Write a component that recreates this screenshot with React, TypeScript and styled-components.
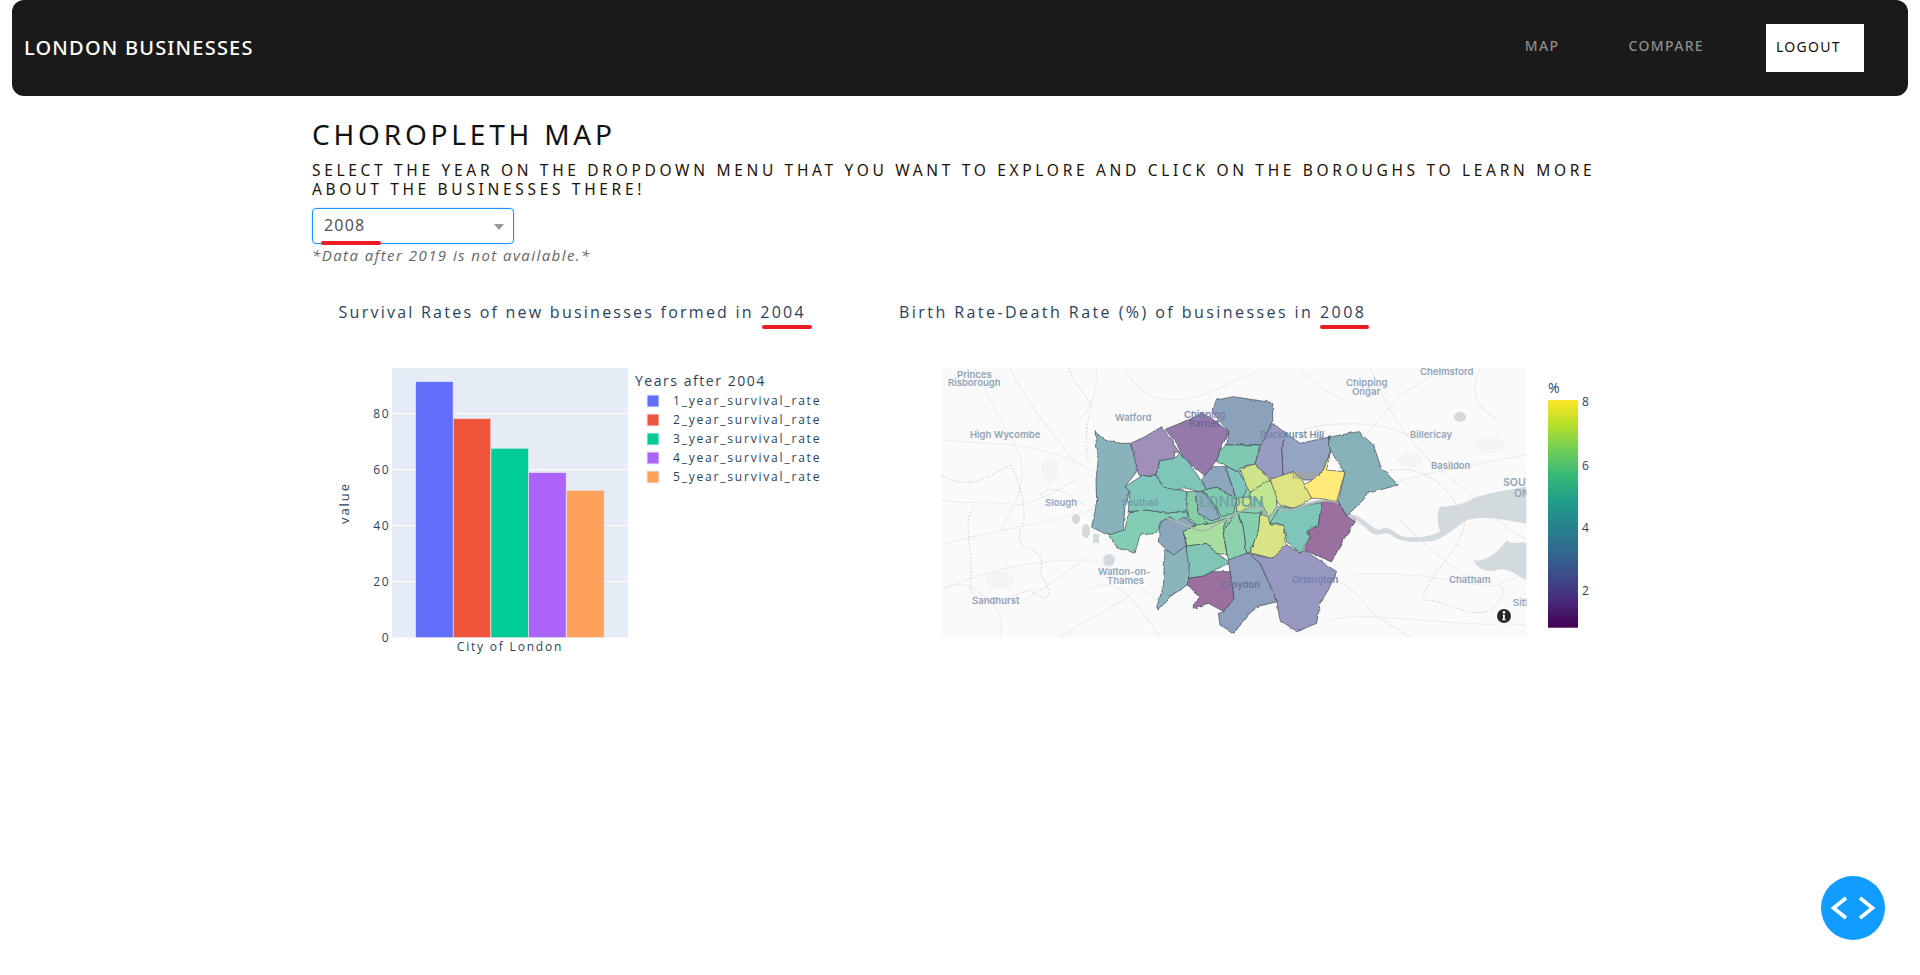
import React from "react";
import styled, { createGlobalStyle } from "styled-components";

const GlobalStyle = createGlobalStyle`
  html, body {
    margin: 0;
    padding: 0;
    background: #fff;
    font-family: "Noto Sans", "Lato", sans-serif;
  }
`;

const Nav = styled.nav`
  height: 96px;
  margin: 0 12px;
  padding: 0 44px 0 12px;
  background: #1a1a1a;
  border-radius: 12px;
  display: flex;
  align-items: center;
  justify-content: space-between;
`;

const Brand = styled.div`
  color: #fff;
  font-size: 20px;
  font-weight: 500;
  letter-spacing: 1.2px;
  margin-top: -2px;
`;

const NavLinks = styled.div`
  display: flex;
  align-items: center;
`;

const NavLink = styled.a`
  color: #8c8c8c;
  font-size: 14px;
  font-weight: 500;
  letter-spacing: 1.35px;
  margin-right: 69px;
  margin-top: -5px;
  &:nth-child(2) {
    margin-right: 62px;
  }
`;

const LogoutButton = styled.button`
  width: 98px;
  height: 48px;
  padding: 0 0 3px 10px;
  border: none;
  background: #fff;
  color: #111;
  font-family: inherit;
  font-size: 14px;
  font-weight: 400;
  letter-spacing: 1.3px;
  text-align: left;
`;

const Container = styled.main`
  width: 1296px;
  margin: 0 auto;
`;

const Heading = styled.h1`
  margin: 21px 0 0;
  height: 34px;
  font-size: 28px;
  line-height: 34px;
  font-weight: 400;
  letter-spacing: 3.8px;
  color: #111;
`;

const SubHeading = styled.h2`
  margin: 10px 0 0;
  font-size: 15.5px;
  line-height: 19px;
  font-weight: 400;
  letter-spacing: 3.68px;
  color: #1d1206;
`;

const Select = styled.div`
  position: relative;
  box-sizing: border-box;
  width: 202px;
  height: 36px;
  margin-top: 9px;
  padding: 0 0 2px 11px;
  display: flex;
  align-items: center;
  border: 1px solid #1a94ff;
  border-radius: 4px;
  box-shadow: 0 0 2px #9fd2ff;
  color: #555;
  font-size: 16px;
  letter-spacing: 1.2px;
  &::before {
    content: "";
    position: absolute;
    left: 8px;
    bottom: -2px;
    width: 60px;
    height: 4px;
    border-radius: 2px;
    background: #ec1c24;
  }
  &::after {
    content: "";
    position: absolute;
    right: 9px;
    top: 15px;
    border-left: 5px solid transparent;
    border-right: 5px solid transparent;
    border-top: 6px solid #999;
  }
`;

const Note = styled.p`
  margin: 1px 0 0;
  font-family: "Open Sans", sans-serif;
  font-size: 15px;
  line-height: 20px;
  font-style: italic;
  letter-spacing: 1.44px;
  color: #666;
`;

const ChartRow = styled.section`
  display: flex;
  margin-top: 35px;
`;

const ChartColumn = styled.div<{ $width: number; $inset: number }>`
  width: ${(p) => p.$width}px;
  padding-left: ${(p) => p.$inset}px;
  box-sizing: border-box;
  flex: none;
`;

const ChartTitle = styled.h3<{ $spacing: number }>`
  margin: 0;
  height: 24px;
  font-family: "Open Sans", sans-serif;
  font-size: 16px;
  line-height: 24px;
  font-weight: 400;
  letter-spacing: ${(p) => p.$spacing}px;
  color: #2a3f5f;
  white-space: nowrap;
`;

const Marked = styled.span<{ $left: number; $right: number }>`
  position: relative;
  &::after {
    content: "";
    position: absolute;
    left: ${(p) => p.$left}px;
    right: ${(p) => p.$right}px;
    bottom: -6px;
    height: 4px;
    border-radius: 2px;
    background: #ec1c24;
  }
`;

const ChartSvg = styled.svg<{ $shift: number }>`
  display: block;
  margin-top: 16px;
  margin-left: -${(p) => p.$shift}px;
  font-family: "Open Sans", sans-serif;
  text {
    fill: #2a3f5f;
    letter-spacing: 0.15em;
  }
`;

const LegendTitle = styled.text`
  && {
    letter-spacing: 0.11em;
  }
  font-size: 14px;
`;

const MapLabel = styled.text<{ $size?: number; $tint?: string }>`
  && {
    fill: ${(p) => p.$tint ?? "#93a3b8"};
    letter-spacing: 0;
  }
  font-family: "Inter", "Noto Sans", sans-serif;
  font-size: ${(p) => p.$size ?? 9.5}px;
  font-weight: 600;
`;

const ToggleButton = styled.button`
  position: fixed;
  left: 1821px;
  top: 876px;
  width: 64px;
  height: 64px;
  padding: 0;
  border: none;
  border-radius: 50%;
  background: #119dff;
  display: flex;
  align-items: center;
  justify-content: center;
`;

const bars = [
  { name: "1_year_survival_rate", color: "#636efa", x: 415.7, top: 381.7 },
  { name: "2_year_survival_rate", color: "#ef553b", x: 453.3, top: 418.7 },
  { name: "3_year_survival_rate", color: "#00cc96", x: 491, top: 448.3 },
  { name: "4_year_survival_rate", color: "#ab63fa", x: 528.7, top: 472.7 },
  { name: "5_year_survival_rate", color: "#ffa15a", x: 566.7, top: 490.3 },
];

const ticks = [
  { label: "80", y: 413.5 },
  { label: "60", y: 469.5 },
  { label: "40", y: 525.5 },
  { label: "20", y: 581.5 },
  { label: "0", y: 637.5 },
];

const SurvivalChart = () => (
  <ChartSvg $shift={26.6} width={560} height={320} viewBox="312 340 560 320">
    <rect x={392} y={368} width={236} height={269.5} fill="#e5ecf6" />
    {ticks.map((t) => (
      <g key={t.label}>
        {t.label !== "0" && (
          <line x1={392} x2={628} y1={t.y} y2={t.y} stroke="#fff" strokeWidth={1} />
        )}
        <text x={390.5} y={t.y + 4.5} fontSize={12} textAnchor="end">
          {t.label}
        </text>
      </g>
    ))}
    {bars.map((b) => (
      <rect
        key={b.name}
        x={b.x}
        y={b.top}
        width={37.4}
        height={637.5 - b.top}
        fill={b.color}
        stroke="#e5ecf6"
        strokeWidth={0.5}
      />
    ))}
    <text
      fontSize={13}
      textAnchor="middle"
      transform="translate(349 503) rotate(-90)"
    >
      value
    </text>
    <text x={510} y={651} fontSize={12} textAnchor="middle">
      City of London
    </text>
    <LegendTitle x={635} y={386}>
      Years after 2004
    </LegendTitle>
    {bars.map((b, i) => (
      <g key={b.name}>
        <rect
          x={647}
          y={395 + i * 19}
          width={12}
          height={12}
          fill={b.color}
          stroke="#e5ecf6"
          strokeWidth={1}
        />
        <text x={673} y={405 + i * 19} fontSize={12}>
          {b.name}
        </text>
      </g>
    ))}
  </ChartSvg>
);

// zoomed reference coordinates, scaled down by the group transform
const boroughs = [
  { c: "#88b3bb", p: "45,125 75,150 120,160 150,160 178,235 135,290 150,305 135,345 130,410 132,435 85,435 35,412 50,340 48,270 55,205" },
  { c: "#a08fb8", p: "152,160 195,140 245,110 300,190 282,183 285,205 240,212 228,255 178,260" },
  { c: "#9579ab", p: "255,118 330,88 365,70 395,85 447,125 420,180 410,210 375,258 330,220 310,205 290,160" },
  { c: "#8ba3ba", p: "395,65 410,30 460,20 578,38 578,100 540,165 440,165 447,125" },
  { c: "#9a9bc3", p: "578,100 618,130 605,170 610,265 575,268 525,222 540,170" },
  { c: "#94a4c2", p: "618,130 660,160 745,142 752,185 730,240 700,270 670,270 640,245 610,265 605,170" },
  { c: "#87b2ba", p: "745,142 835,125 880,165 905,235 955,285 860,310 855,325 800,378 775,335 795,245 752,185" },
  { c: "#ffea7a", p: "752,185 740,240 795,245 770,335 720,325 695,325 668,285 700,270 730,240" },
  { c: "#dfe382", p: "570,268 640,245 665,270 695,325 640,355 600,345 585,325" },
  { c: "#9a6f9f", p: "725,335 775,335 800,378 828,392 790,450 755,515 672,480 690,440 680,425 715,405" },
  { c: "#7fc5b8", p: "600,350 640,355 720,338 725,335 715,405 680,425 690,440 660,490 620,455 610,405 570,400" },
  { c: "#d8e485", p: "540,372 565,380 570,405 610,405 615,455 630,480 575,505 510,488 535,420" },
  { c: "#9899c0", p: "505,490 575,505 620,465 660,490 672,480 770,545 745,600 720,640 710,700 650,725 600,690 590,630 540,520" },
  { c: "#8ea0bd", p: "445,510 480,490 505,490 540,520 592,635 530,650 500,680 462,730 420,705 415,670 432,665 462,625 450,545" },
  { c: "#9a6f9f", p: "322,565 370,558 395,545 450,545 462,625 432,665 385,640 340,655 340,645 360,620 322,585" },
  { c: "#80c5b5", p: "318,468 380,460 410,490 440,510 445,520 395,545 370,558 322,565" },
  { c: "#a8dea0", p: "310,425 340,410 395,400 440,385 430,430 440,495 410,490 380,460 320,468" },
  { c: "#8dd0ae", p: "455,380 475,370 490,410 500,490 445,510 430,430" },
  { c: "#85cfb0", p: "475,365 530,370 545,365 540,372 535,420 510,488 500,490 490,410" },
  { c: "#8ab5bb", p: "255,480 280,490 318,468 328,545 322,585 270,620 235,660 230,650 250,590" },
  { c: "#8ca6bc", p: "235,455 240,400 270,380 310,378 345,405 310,425 318,468 280,495 255,475" },
  { c: "#84cdb5", p: "85,435 135,420 145,365 200,360 260,370 320,362 325,380 290,395 270,380 240,400 230,430 180,435 165,490 110,470" },
  { c: "#80c6bb", p: "135,290 185,258 225,255 250,290 320,305 320,362 260,370 200,360 145,365 150,305" },
  { c: "#7fc6b8", p: "228,255 240,212 285,205 300,190 310,205 330,220 380,300 355,305 320,295 280,300 250,290" },
  { c: "#8ba6bd", p: "365,270 395,230 435,230 470,330 440,310 410,290 380,300" },
  { c: "#7fc9b3", p: "420,180 440,165 540,165 525,222 485,230 480,250 435,225 410,215" },
  { c: "#7fc5bb", p: "437,228 480,250 505,290 490,320 470,330" },
  { c: "#d0e48a", p: "480,235 525,222 570,268 585,325 510,305 500,290" },
  { c: "#bee78f", p: "510,308 550,280 570,268 590,320 590,350 565,380 545,340 510,320" },
  { c: "#7fcaaf", p: "370,302 410,290 440,310 470,330 460,370 425,380 400,340" },
  { c: "#86cfa6", p: "320,305 345,305 355,370 385,400 350,405 325,380" },
  { c: "#8ca9bd", p: "345,305 370,305 400,345 420,385 395,392 355,370" },
  { c: "#d0e48a", p: "470,325 510,318 515,350 470,370" },
];

const roads = [
  "M942 545 C990 530 1040 525 1085 512 C1110 505 1130 500 1160 480",
  "M942 440 C985 445 1030 440 1075 462 C1090 470 1100 476 1112 476",
  "M1010 368 C1025 400 1050 430 1075 462",
  "M942 590 C985 570 1030 560 1080 560 C1110 560 1130 580 1170 610",
  "M1000 637 C1005 610 990 600 975 590 C960 580 950 585 942 590",
  "M1125 368 C1135 390 1150 400 1175 400 C1200 400 1225 385 1260 370",
  "M1096 368 C1100 385 1092 405 1080 420",
  "M1370 368 C1385 400 1395 430 1440 470 C1470 490 1490 520 1527 540",
  "M1345 500 C1390 480 1440 470 1527 455",
  "M1350 575 C1400 570 1450 580 1480 585 C1500 590 1515 575 1527 575",
  "M1330 620 C1370 610 1420 625 1527 625",
  "M1300 430 C1340 420 1380 420 1420 440",
  "M1340 470 C1360 440 1380 420 1400 395 C1420 385 1440 368 1450 368",
  "M1090 590 C1120 570 1140 610 1160 637",
  "M975 368 C990 400 1000 420 1015 445 C1030 470 1020 500 1000 530",
  "M942 500 C960 505 990 500 1020 505 C1040 500 1060 490 1075 480",
  "M1025 600 C1050 585 1070 570 1090 555",
  "M1060 637 C1085 620 1110 610 1130 595",
  "M1300 368 C1315 385 1330 395 1345 400",
  "M1480 368 C1470 390 1475 410 1500 420",
  "M1400 520 C1420 540 1440 560 1480 585",
  "M1280 560 C1320 570 1350 580 1370 610 C1380 620 1400 630 1410 637",
];

const boundaries = [
  "M1069 368 C1075 385 1085 395 1092 405 C1085 425 1085 445 1088 460",
  "M942 475 C965 490 985 480 1010 465 C1020 480 1030 520 1020 530 C1015 560 1050 540 1040 575 C1055 590 1050 610 1030 590 C1000 600 985 610 970 590 C975 550 960 520 975 505",
  "M1040 495 C1060 480 1070 500 1085 505",
  "M1390 470 C1430 465 1450 490 1465 520 C1460 555 1430 570 1422 600 C1450 600 1470 620 1490 610 C1505 600 1505 590 1500 585",
];

const labels = [
  { t: "Princes", x: 957, y: 378 },
  { t: "Risborough", x: 948, y: 386 },
  { t: "Watford", x: 1115, y: 421 },
  { t: "High Wycombe", x: 970, y: 438 },
  { t: "Slough", x: 1045, y: 506 },
  { t: "Walton-on-", x: 1098, y: 575 },
  { t: "Thames", x: 1107, y: 584 },
  { t: "Sandhurst", x: 972, y: 604 },
  { t: "Chipping", x: 1346, y: 386 },
  { t: "Ongar", x: 1352, y: 395 },
  { t: "Chelmsford", x: 1420, y: 375 },
  { t: "Billericay", x: 1410, y: 438 },
  { t: "Basildon", x: 1431, y: 469 },
  { t: "Chatham", x: 1449, y: 583 },
  { t: "Sittingbourne", x: 1513, y: 606 },
];

// labels that show through the coloured boroughs
const overLabels = [
  { t: "Chipping", x: 1184, y: 418, c: "#7d7ea6" },
  { t: "Barnet", x: 1189, y: 427, c: "#6f6795" },
  { t: "Southall", x: 1121, y: 506, c: "#6fa0a8" },
  { t: "Buckhurst Hill", x: 1260, y: 438, c: "#7489a8" },
  { t: "Ilford", x: 1292, y: 479, c: "#a9a98a" },
  { t: "Croydon", x: 1221, y: 588, c: "#6f7398" },
  { t: "Orpington", x: 1292, y: 583, c: "#7480a8" },
];

const viridis = [
  "#440154", "#482878", "#3e4989", "#31688e", "#26828e",
  "#1f9e89", "#35b779", "#6ece58", "#b5de2b", "#fde725",
];

const scaleTicks = [
  { label: "8", y: 406 },
  { label: "6", y: 470 },
  { label: "4", y: 532 },
  { label: "2", y: 595 },
];

const BoroughMap = () => (
  <ChartSvg $shift={27} width={736} height={320} viewBox="872 340 736 320">
    <defs>
      <clipPath id="map-clip">
        <rect x={942} y={368} width={584.5} height={269.5} />
      </clipPath>
      <linearGradient id="viridis" x1="0" y1="1" x2="0" y2="0">
        {viridis.map((c, i) => (
          <stop key={c} offset={i / (viridis.length - 1)} stopColor={c} />
        ))}
      </linearGradient>
      <filter id="rough" x="-5%" y="-5%" width="110%" height="110%">
        <feTurbulence type="fractalNoise" baseFrequency="0.045" numOctaves={2} seed={4} />
        <feDisplacementMap in="SourceGraphic" scale={9} xChannelSelector="R" yChannelSelector="G" />
      </filter>
    </defs>
    <g clipPath="url(#map-clip)">
      <rect x={942} y={368} width={585} height={270} fill="#fafafa" />
      <g fill="#f3f4f3">
        <ellipse cx={1050} cy={470} rx={9} ry={12} />
        <ellipse cx={1000} cy={580} rx={14} ry={9} />
        <ellipse cx={1410} cy={460} rx={12} ry={7} />
        <ellipse cx={1490} cy={445} rx={14} ry={8} />
      </g>
      <g fill="none" stroke="#ebecec" strokeWidth={1.1}>
        {roads.map((d) => (
          <path key={d} d={d} />
        ))}
      </g>
      <g fill="none" stroke="#e6b9c1" strokeWidth={0.9} strokeDasharray="1.5 2">
        {boundaries.map((d) => (
          <path key={d} d={d} />
        ))}
      </g>
      <g fill="#d3dade">
        <ellipse cx={1076} cy={519} rx={4} ry={5} />
        <ellipse cx={1086} cy={531} rx={4} ry={7} />
        <rect x={1093} y={534} width={6} height={9} />
        <ellipse cx={1109} cy={560} rx={6} ry={6} />
        <ellipse cx={1460} cy={417} rx={6} ry={5} />
        <g transform="translate(1240 350) scale(.3333)">
          <path d="M340 495 C370 500 390 535 420 540 C445 520 460 550 490 560 C530 565 570 560 600 545 C590 510 590 490 600 470 C640 470 680 460 700 445 C740 430 800 420 860 410 L860 522 C800 510 740 495 680 510 C650 530 620 560 580 572 C540 578 490 578 460 560 C440 540 420 560 400 552 C380 540 360 515 340 505 Z" />
          <path d="M700 630 C740 640 780 600 800 570 C820 590 840 570 860 580 L860 690 C830 680 810 650 770 660 C740 670 710 655 700 630 Z" />
        </g>
      </g>
      {labels.map((l) => (
        <MapLabel key={l.t + l.x} x={l.x} y={l.y}>
          {l.t}
        </MapLabel>
      ))}
      <MapLabel x={1503} y={486} $size={10.5}>
        SOUTHEND-
      </MapLabel>
      <MapLabel x={1514} y={497} $size={10.5}>
        ON-SEA
      </MapLabel>
      <g transform="translate(1080 390) scale(.3333)">
        <path
          d="M590 350 C610 370 640 360 680 345 C710 335 750 325 775 340 C790 350 795 380 830 385"
          fill="none"
          stroke="#c9cfd2"
          strokeWidth={13}
        />
        <polygon points="300,380 370,300 510,300 600,350 600,400 510,490 320,470" fill="#8dcfb0" />
        <g filter="url(#rough)">
          {boroughs.map((b) => (
            <polygon
              key={b.p}
              points={b.p}
              fill={b.c}
              stroke="#3c4650"
              strokeWidth={2}
              strokeLinejoin="round"
            />
          ))}
        </g>
        <path
          d="M262 385 C290 395 300 400 330 410 C345 420 365 425 380 420 C420 400 450 380 480 365 C520 345 550 350 560 375 C575 385 580 360 590 350 C610 370 640 360 680 345 C710 335 750 325 775 340"
          fill="none"
          stroke="#a9b5ae"
          strokeWidth={5}
        />
      </g>
      {overLabels.map((l) => (
        <MapLabel key={l.t + l.x} x={l.x} y={l.y} $tint={l.c}>
          {l.t}
        </MapLabel>
      ))}
      <MapLabel x={1199} y={507} $size={15} $tint="#6fa6a6">
        LONDON
      </MapLabel>
      <circle cx={1504} cy={616} r={10} fill="#fff" fillOpacity={0.6} />
      <circle cx={1504} cy={616} r={7} fill="#262626" />
      <circle cx={1504} cy={612.2} r={1.3} fill="#fff" />
      <path d="M1502.6 614.6h2.2v4.6h.9v1h-3.6v-1h.9v-3.6h-.4z" fill="#fff" />
    </g>
    <text x={1548} y={393} fontSize={14} style={{ letterSpacing: 0 }}>
      %
    </text>
    <rect x={1548} y={400} width={30} height={227.7} fill="url(#viridis)" />
    {scaleTicks.map((t) => (
      <text key={t.label} x={1582} y={t.y} fontSize={12}>
        {t.label}
      </text>
    ))}
  </ChartSvg>
);

export default function App() {
  return (
    <>
      <GlobalStyle />
      <Nav>
        <Brand>LONDON BUSINESSES</Brand>
        <NavLinks>
          <NavLink>MAP</NavLink>
          <NavLink>COMPARE</NavLink>
          <LogoutButton>LOGOUT</LogoutButton>
        </NavLinks>
      </Nav>
      <Container>
        <Heading>CHOROPLETH MAP</Heading>
        <SubHeading>
          SELECT THE YEAR ON THE DROPDOWN MENU THAT YOU WANT TO EXPLORE AND
          CLICK ON THE BOROUGHS TO LEARN MORE ABOUT THE BUSINESSES THERE!
        </SubHeading>
        <Select>2008</Select>
        <Note>*Data after 2019 is not available.*</Note>
        <ChartRow>
          <ChartColumn $width={560} $inset={26.6}>
            <ChartTitle $spacing={2.24}>
              Survival Rates of new businesses formed in{" "}
              <Marked $left={2} $right={-6}>2004</Marked>
            </ChartTitle>
            <SurvivalChart />
          </ChartColumn>
          <ChartColumn $width={736} $inset={27}>
            <ChartTitle $spacing={2.44}>
              Birth Rate-Death Rate (%) of businesses in{" "}
              <Marked $left={0} $right={-3}>2008</Marked>
            </ChartTitle>
            <BoroughMap />
          </ChartColumn>
        </ChartRow>
      </Container>
      <ToggleButton aria-label="toggle">
        <svg width={64} height={64} viewBox="0 0 64 64" fill="none">
          <path
            d="M25 22 L12.5 32 L25 42 M39 22 L51.5 32 L39 42"
            stroke="#fff"
            strokeWidth={3.6}
          />
        </svg>
      </ToggleButton>
    </>
  );
}
